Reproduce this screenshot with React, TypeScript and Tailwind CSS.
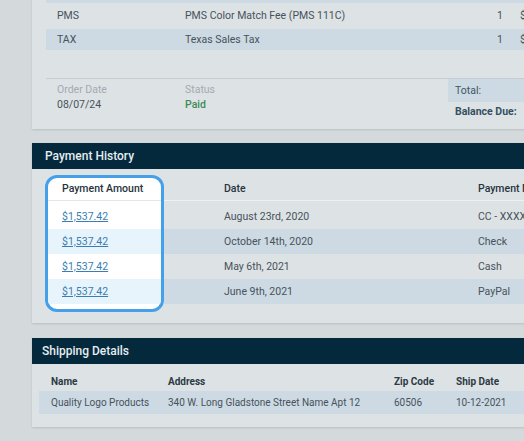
const font = { fontFamily: "Roboto, 'Liberation Sans', sans-serif" };

const payments = [
  { amount: "$1,537.42", date: "August 23rd, 2020", method: "CC - XXXX-XXXX-1234" },
  { amount: "$1,537.42", date: "October 14th, 2020", method: "Check" },
  { amount: "$1,537.42", date: "May 6th, 2021", method: "Cash" },
  { amount: "$1,537.42", date: "June 9th, 2021", method: "PayPal" },
];

const OrderCard = () => (
  <div className="ml-[32px] -mt-[21px] w-[560px] bg-[#dde2e5] px-[14px] shadow-[0_1px_2px_rgba(0,0,0,0.12)]">
    <div className="h-[24px] bg-[#cddae3]" />
    <div className="flex h-[26px] items-center text-[10.5px] text-[#47525b]">
      <div className="w-[139px] pl-[11px]">PMS</div>
      <div className="w-[300px]">PMS Color Match Fee (PMS 111C)</div>
      <div className="w-[18px] text-right">1</div>
      <div className="pl-[17px]">$10.00</div>
    </div>
    <div className="flex h-[21px] items-center bg-[#cddae3] text-[10.5px] text-[#47525b]">
      <div className="w-[139px] pl-[11px]">TAX</div>
      <div className="w-[300px]">Texas Sales Tax</div>
      <div className="w-[18px] text-right">1</div>
      <div className="pl-[17px]">$24.50</div>
    </div>
    <div className="h-[28px]" />
    <div className="flex border-t border-[#c6ccd0] pb-[7px] text-[10.5px]">
      <div className="w-[139px] pl-[11px] pt-[4px]">
        <div className="leading-[14px] text-[#a3abb1]">Order Date</div>
        <div className="mt-[1px] leading-[14px] text-[#47525b]">08/07/24</div>
      </div>
      <div className="w-[263px] pt-[4px]">
        <div className="leading-[14px] text-[#a3abb1]">Status</div>
        <div className="mt-[1px] font-medium leading-[14px] text-[#3f8a57]">Paid</div>
      </div>
      <div className="flex-1">
        <div className="flex h-[23px] items-center bg-[#cddae3] pl-[7px] text-[#3d5566]">Total:</div>
        <div className="flex h-[20px] items-center pl-[7px] font-bold text-[#34505f]">Balance Due:</div>
      </div>
    </div>
  </div>
);

const PaymentCard = () => (
  <div className="ml-[32px] mt-[14px] w-[560px] bg-[#dde2e5] shadow-[0_1px_2px_rgba(0,0,0,0.12)]">
    <div className="flex h-[26px] items-center bg-[#04293d] pl-[13px] text-[12px] font-medium text-[#e6edf1]">
      Payment History
    </div>
    <div className="flex pl-[13px] pt-[6px] pb-[11px] text-[10.5px]">
      <div className="w-[119px] overflow-hidden rounded-[12px] border-[3px] border-[#45a0e9] bg-white pb-[5px]">
        <div className="flex h-[23px] items-center border-b border-[#e3e7ea] pl-[14px] font-medium text-[#27343d]">
          Payment Amount
        </div>
        <div className="h-[3px]" />
        {payments.map((p, i) => (
          <div
            key={i}
            className={`flex h-[25px] items-center pl-[14px] ${i % 2 === 1 ? "bg-[#e8f4fc]" : ""}`}
          >
            <a href="#" className="text-[#3a7db3] underline">
              {p.amount}
            </a>
          </div>
        ))}
      </div>
      <div className="flex-1 pt-[3px]">
        <div className="flex h-[23px] items-center border-b border-[#eef1f3] font-medium text-[#27343d]">
          <div className="w-[314px] pl-[60px]">Date</div>
          <div className="whitespace-nowrap">Payment Method</div>
        </div>
        <div className="h-[3px]" />
        {payments.map((p, i) => (
          <div
            key={i}
            className={`flex h-[25px] items-center text-[#47525b] ${i % 2 === 1 ? "bg-[#cddae3]" : ""}`}
          >
            <div className="w-[314px] pl-[60px]">{p.date}</div>
            <div className="whitespace-nowrap">{p.method}</div>
          </div>
        ))}
      </div>
    </div>
  </div>
);

const ShippingCard = () => (
  <div className="ml-[32px] mt-[15px] w-[560px] bg-[#dde2e5] shadow-[0_1px_2px_rgba(0,0,0,0.12)]">
    <div className="flex h-[26px] items-center bg-[#04293d] pl-[10px] text-[12px] font-medium text-[#e6edf1]">
      Shipping Details
    </div>
    <div className="px-[7px] pt-[7px] pb-[13px] text-[10px]">
      <div className="flex h-[20px] items-center font-bold text-[#2c3a44]">
        <div className="w-[129px] pl-[12px]">Name</div>
        <div className="w-[226px]">Address</div>
        <div className="w-[62px]">Zip Code</div>
        <div>Ship Date</div>
      </div>
      <div className="flex h-[23px] items-center bg-[#cddae3] text-[#47525b]">
        <div className="w-[129px] pl-[12px]">Quality Logo Products</div>
        <div className="w-[226px]">340 W. Long Gladstone Street Name Apt 12</div>
        <div className="w-[62px]">60506</div>
        <div>10-12-2021</div>
      </div>
    </div>
  </div>
);

export default function App() {
  return (
    <div className="h-[441px] w-[524px] overflow-hidden bg-[#d4d9dc]" style={font}>
      <OrderCard />
      <PaymentCard />
      <ShippingCard />
    </div>
  );
}
